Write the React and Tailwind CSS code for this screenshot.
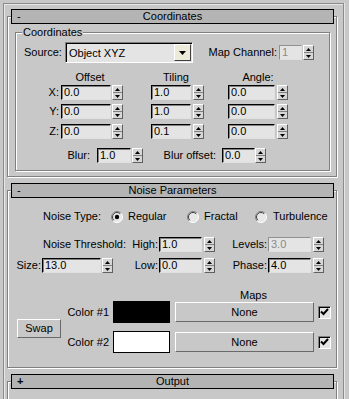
import React from 'react';

const etched = 'border border-[#808080] shadow-[inset_1px_1px_0_#fff,1px_1px_0_#fff]';

const Spinner = () => (
  <div className="flex h-[15px] w-[11px] flex-col border border-t-white border-l-white border-r-[#606060] border-b-[#606060] bg-[#d6d6d6]">
    <div className="flex flex-1 items-center justify-center border-b border-[#808080]">
      <svg width="5" height="3" viewBox="0 0 5 3"><path d="M2.5 0L5 3H0z" fill="#000" /></svg>
    </div>
    <div className="flex flex-1 items-center justify-center">
      <svg width="5" height="3" viewBox="0 0 5 3"><path d="M0 0H5L2.5 3z" fill="#000" /></svg>
    </div>
  </div>
);

const Field = ({ value, className, disabled }) => (
  <div
    className={`h-[15px] border border-r-[#e0e0e0] border-b-[#e0e0e0] bg-[#e4e4e4] pl-[2px] leading-[13px] ${
      disabled
        ? 'border-t-[#909090] border-l-[#909090] text-[#8a8a8a]'
        : 'border-t-black border-l-black shadow-[inset_1px_1px_0_#808080]'
    } ${className}`}
  >
    {value}
  </div>
);

const Radio = ({ checked }) => (
  <svg width="12" height="12" viewBox="0 0 12 12">
    <circle cx="6" cy="6" r="5.5" fill="#e8e8e8" />
    <path d="M2.1 9.9A5.5 5.5 0 0 1 9.9 2.1" fill="none" stroke="#808080" />
    <path d="M9.9 2.1A5.5 5.5 0 0 1 2.1 9.9" fill="none" stroke="#fff" />
    <path d="M2.8 9.2A4.5 4.5 0 0 1 9.2 2.8" fill="none" stroke="#404040" />
    {checked && <circle cx="6" cy="6" r="2.2" fill="#000" />}
  </svg>
);

const Check = () => (
  <div className="flex h-[13px] w-[13px] items-center justify-center border border-t-[#808080] border-l-[#808080] border-r-white border-b-white bg-[#e4e4e4] shadow-[inset_1px_1px_0_#000]">
    <svg width="9" height="8" viewBox="0 0 9 8">
      <path d="M1 3.5L3.5 6L8 1" fill="none" stroke="#000" strokeWidth="2" />
    </svg>
  </div>
);

const Rollout = ({ title, sign, bold, className, children }) => (
  <div className={`ml-[3px] w-[330px] ${etched} ${className}`}>
    <div className="-mt-[8px] ml-[3px] flex h-[15px] w-[323px] items-center border border-black bg-[#b4b4b4] leading-[13px]">
      <span className={`w-[16px] pl-[5px] ${bold ? 'font-bold' : ''}`}>{sign}</span>
      <span className="flex-1 text-center">{title}</span>
      <span className="w-[16px]" />
    </div>
    {children}
  </div>
);

const XYZRow = ({ axis, offset, tiling, angle, className }) => (
  <div className={`flex h-[15px] items-center ${className}`}>
    <span className="w-[43px] text-right">{axis}:</span>
    <Field value={offset} className="ml-[2px] w-[50px]" />
    <div className="ml-[1px]"><Spinner /></div>
    <Field value={tiling} className="ml-[28px] w-[40px]" />
    <div className="ml-[2px]"><Spinner /></div>
    <Field value={angle} className="ml-[24px] w-[47px]" />
    <div className="ml-[2px]"><Spinner /></div>
  </div>
);

const ThresholdRow = ({ label, labelClass, first, firstClass, second, secondLabel, third, thirdLabel, disabledThird, className }) => (
  <div className={`flex h-[15px] items-center ${className}`}>
    <span className={`text-right ${labelClass}`}>{label}</span>
    {first && <Field value={first} className={`ml-[1px] ${firstClass}`} />}
    {first && <div className="ml-[1px]"><Spinner /></div>}
    <span className={`text-right ${first ? 'w-[45px]' : 'w-[32px]'}`}>{secondLabel}</span>
    <Field value={second} className="ml-[1px] w-[43px]" />
    <div className="ml-[2px]"><Spinner /></div>
    <span className="w-[52px] text-right">{thirdLabel}</span>
    <Field value={third} disabled={disabledThird} className="ml-[1px] w-[43px]" />
    <div className="ml-[2px]"><Spinner /></div>
  </div>
);

const RaisedButton = ({ children, className }) => (
  <div className={`flex items-center justify-center border border-t-white border-l-white border-r-[#6a6a6a] border-b-[#6a6a6a] bg-[#c8c8c8] ${className}`}>
    {children}
  </div>
);

export default function App() {
  return (
    <div className="h-[399px] w-[349px] overflow-hidden bg-[#c8c8c8] pl-[3px] pt-[3px] font-['Liberation_Sans',Arial,sans-serif] text-[11px] leading-none text-black">
      <div className="h-[400px] w-[341px] border-l border-t border-r border-[#8c8c8c] shadow-[inset_1px_1px_0_#e6e6e6,1px_0_0_#e6e6e6]">
        <Rollout title="Coordinates" sign="-" className="mt-[12px] h-[161px]">
          <div className={`ml-[7px] mt-[8px] h-[139px] w-[315px] ${etched}`}>
            <div className="-mt-[7px] ml-[6px] w-fit bg-[#c8c8c8] px-[1px] leading-[12px]">Coordinates</div>

            <div className="mt-[4px] flex h-[21px] items-center pl-[8px]">
              <span className="w-[41px]">Source:</span>
              <div className="flex h-[21px] w-[128px] border border-t-[#808080] border-l-[#808080] border-r-white border-b-white bg-[#e4e4e4] shadow-[inset_1px_1px_0_#000]">
                <span className="flex-1 pl-[3px] pt-[1px] leading-[18px]">Object XYZ</span>
                <div className="my-[1px] mr-[1px] flex w-[17px] items-center justify-center border border-t-white border-l-white border-r-[#404040] border-b-[#404040] bg-[#ecead8]">
                  <svg width="7" height="4" viewBox="0 0 7 4"><path d="M0 0H7L3.5 4z" fill="#000" /></svg>
                </div>
              </div>
              <span className="w-[84px] text-right">Map Channel:</span>
              <Field value="1" disabled className="ml-[2px] w-[23px]" />
              <div className="ml-[1px]"><Spinner /></div>
            </div>

            <div className="mt-[8px] flex h-[12px] leading-[12px]">
              <span className="ml-[44px] w-[60px] text-center">Offset</span>
              <span className="ml-[26px] w-[60px] text-center">Tiling</span>
              <span className="ml-[22px] w-[60px] text-center">Angle:</span>
            </div>

            <XYZRow axis="X" offset="0.0" tiling="1.0" angle="0.0" className="mt-[2px]" />
            <XYZRow axis="Y" offset="0.0" tiling="1.0" angle="0.0" className="mt-[4px]" />
            <XYZRow axis="Z" offset="0.0" tiling="0.1" angle="0.0" className="mt-[5px]" />

            <div className="mt-[9px] flex h-[15px] items-center">
              <span className="w-[74px] text-right">Blur:</span>
              <Field value="1.0" className="ml-[7px] w-[34px]" />
              <div className="ml-[1px]"><Spinner /></div>
              <span className="w-[73px] text-right">Blur offset:</span>
              <Field value="0.0" className="ml-[6px] w-[33px]" />
              <Spinner />
            </div>
          </div>
        </Rollout>

        <Rollout title="Noise Parameters" sign="-" className="mt-[13px] h-[178px]">
          <div className="mt-[12px] flex h-[13px] items-center">
            <span className="w-[93px] text-right">Noise Type:</span>
            <div className="ml-[10px] flex"><Radio checked /></div>
            <span className="ml-[5px] w-[59px]">Regular</span>
            <div className="flex"><Radio /></div>
            <span className="ml-[5px] w-[51px]">Fractal</span>
            <div className="flex"><Radio /></div>
            <span className="ml-[6px]">Turbulence</span>
          </div>

          <ThresholdRow
            className="mt-[14px]"
            label="Noise Threshold:"
            labelClass="w-[118px]"
            secondLabel="High:"
            second="1.0"
            thirdLabel="Levels:"
            third="3.0"
            disabledThird
          />
          <ThresholdRow
            className="mt-[6px]"
            label="Size:"
            labelClass="w-[33px]"
            first="13.0"
            firstClass="w-[59px]"
            secondLabel="Low:"
            second="0.0"
            thirdLabel="Phase:"
            third="4.0"
          />

          <div className="ml-[167px] mt-[16px] h-[12px] w-[157px] text-center leading-[12px]">Maps</div>

          <div className="flex">
            <RaisedButton className="ml-[9px] mt-[18px] h-[19px] w-[44px]">Swap</RaisedButton>
            <div className="flex flex-col">
              <div className="flex h-[22px] items-center">
                <span className="w-[48px] text-right">Color #1</span>
                <div className="ml-[4px] h-[22px] w-[57px] border border-black bg-black" />
                <RaisedButton className="ml-[5px] h-[20px] w-[139px]">None</RaisedButton>
                <div className="ml-[4px]"><Check /></div>
              </div>
              <div className="mt-[8px] flex h-[22px] items-center">
                <span className="w-[48px] text-right">Color #2</span>
                <div className="ml-[4px] h-[22px] w-[57px] border border-black bg-white" />
                <RaisedButton className="ml-[5px] h-[20px] w-[139px]">None</RaisedButton>
                <div className="ml-[4px]"><Check /></div>
              </div>
            </div>
          </div>
        </Rollout>

        <Rollout title="Output" sign="+" bold className="mt-[13px] h-[40px]" />
      </div>
    </div>
  );
}
